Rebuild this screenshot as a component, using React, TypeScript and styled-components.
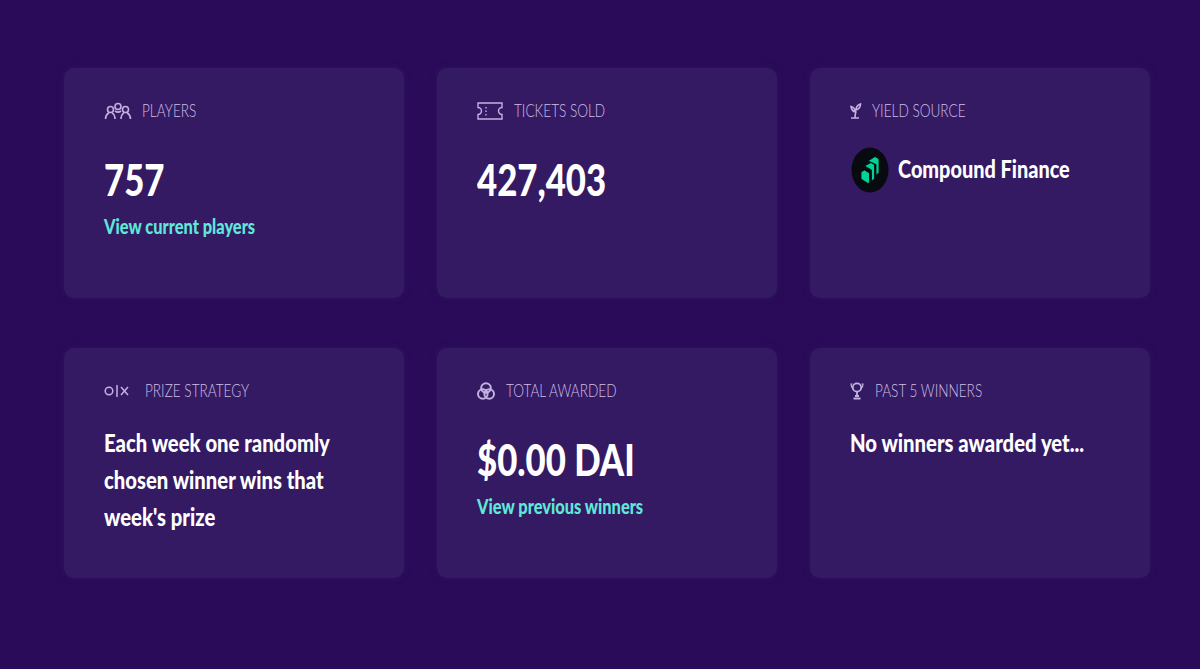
import { ReactElement, ReactNode } from "react";
import styled, { createGlobalStyle, css } from "styled-components";

const GlobalStyle = createGlobalStyle`
    html, body {
        margin: 0;
        background: #2a0b5a;
        font-family: "Lato", sans-serif;
    }
`;

// no condensed face is installed, so the text is squeezed sideways
const condensed = (ratio: number) => css`
    width: ${100 / ratio}%;
    transform: scaleX(${ratio});
    transform-origin: left center;
`;

const Page = styled.div`
    box-sizing: border-box;
    width: 1200px;
    height: 669px;
    padding: 68px 50px 0 64px;
`;

const Grid = styled.div`
    display: grid;
    grid-template-columns: repeat(3, 340.33px);
    grid-auto-rows: 230px;
    column-gap: 32.5px;
    row-gap: 50px;
`;

const Card = styled.section`
    box-sizing: border-box;
    padding: 30px 40px;
    background: #341a63;
    border-radius: 10px;
    box-shadow: 0 0 6px rgba(50, 25, 100, 0.5);
`;

const Header = styled.div`
    display: flex;
    align-items: center;
    height: 26px;
`;

const IconSlot = styled.span<{ $gap: number }>`
    display: flex;
    margin-right: ${props => props.$gap}px;
`;

const Label = styled.h3`
    margin: 0 0 2px;
    font-size: 17px;
    font-weight: 300;
    color: #cdbfe5;
    white-space: nowrap;
    transform: scaleX(0.8);
    transform-origin: left center;
`;

const Stat = styled.p`
    margin: 30px 0 0;
    font-size: 44px;
    line-height: 50px;
    font-weight: 900;
    color: #ffffff;
    ${condensed(0.79)}
`;

const StatLink = styled.a`
    display: block;
    margin-top: 11px;
    font-size: 20px;
    line-height: 22px;
    font-weight: 900;
    color: #5ee8d8;
    ${condensed(0.82)}
`;

const BodyText = styled.p`
    margin: 20px 0 0;
    font-size: 25px;
    line-height: 37px;
    font-weight: 900;
    color: #ffffff;
    ${condensed(0.81)}
`;

const Source = styled.div`
    display: flex;
    align-items: center;
    margin: 23px 0 0 1px;
    gap: 9px;
`;

const CoinSvg = styled.svg`
    flex-shrink: 0;
`;

const SourceName = styled.span`
    margin-bottom: 5px;
    font-size: 25px;
    font-weight: 900;
    color: #ffffff;
    white-space: nowrap;
    transform: scaleX(0.795);
    transform-origin: left center;
`;

const CoinMark = (): ReactElement => (
    <CoinSvg width="38" height="46" viewBox="0 0 38 46">
        <ellipse cx="19" cy="23" rx="18.5" ry="22.5" fill="#070a0e" />
        <g fill="#00d395" stroke="#070a0e" strokeWidth="0.8">
            <path d="M10 25l3.500-2 5 3v9.500l-1.500 1-7-4.500z" />
            <path d="M13.500 19l6.500-3.500 3.500 2.500v14l-3 2V23z" />
            <path d="M17 14l7-4.500 4 2.500v14l-3 2V17.500z" />
        </g>
    </CoinSvg>
);

const PlayersIcon = (): ReactElement => (
    <svg width="28" height="18" viewBox="0 0 28 18" fill="none" stroke="#c3b2e0" strokeWidth="1.6">
        <circle cx="6.500" cy="7.500" r="3" />
        <circle cx="14" cy="4.500" r="3" />
        <circle cx="21.500" cy="7.500" r="3" />
        <path d="M1.500 17c0-3 1.500-5 3.500-6.500M8 10.500c1.800 1.500 3 3.500 3 6.500" />
        <path d="M11 9c2 1.500 4 1.500 6 0" />
        <path d="M26.500 17c0-3-1.500-5-3.500-6.500M20 10.500c-1.800 1.500-3 3.500-3 6.500" />
    </svg>
);

const TicketIcon = (): ReactElement => (
    <svg width="26" height="18" viewBox="0 0 26 18" fill="none" stroke="#c3b2e0" strokeWidth="1.4">
        <path d="M1 1h24v4.500a3.500 3.500 0 0 0 0 7V17H1v-4.500a3.500 3.500 0 0 0 0-7z" />
        <path d="M9 5v1.500M9 8.500v1.500M9 12v1.500" />
    </svg>
);

const SproutIcon = (): ReactElement => (
    <svg width="12" height="16" viewBox="0 0 12 16" fill="none" stroke="#c3b2e0" strokeWidth="1.6">
        <path d="M1 15h8M5 15c0-3 .5-5 1-7M5.500 9C3 8.500 1.500 6.500 1 3.500c2.500.5 4 2.500 4.500 5.500zM6 7c0-3 1.500-5 4.500-6 0 3-1.500 5-4.500 6z" />
    </svg>
);

const StrategyIcon = (): ReactElement => (
    <svg width="26" height="12" viewBox="0 0 26 12" fill="none" stroke="#c3b2e0" strokeWidth="1.5">
        <circle cx="5" cy="6" r="3.800" />
        <path d="M13 0v12M17 2l7 8M24 2l-7 8" />
    </svg>
);

const AwardIcon = (): ReactElement => (
    <svg width="18" height="18" viewBox="0 0 18 18" fill="none" stroke="#c3b2e0" strokeWidth="2">
        <circle cx="9" cy="6" r="4.800" />
        <circle cx="5.800" cy="12" r="4.800" />
        <circle cx="12.200" cy="12" r="4.800" />
    </svg>
);

const TrophyIcon = (): ReactElement => (
    <svg width="14" height="18" viewBox="0 0 14 18" fill="none" stroke="#c3b2e0" strokeWidth="1.800">
        <circle cx="7" cy="5.500" r="4.200" />
        <path d="M7 10v4M3.500 16.500h7M5 14h4" />
        <path d="M2.500 2H1c0 2 .5 3.500 2 4.500M11.500 2H13c0 2-.5 3.500-2 4.500" strokeWidth="1.200" />
    </svg>
);

interface PanelProps {
    icon: ReactNode;
    gap: number;
    label: string;
    children: ReactNode;
}

const Panel = (props: PanelProps): ReactElement => (
    <Card>
        <Header>
            <IconSlot $gap={props.gap}>{props.icon}</IconSlot>
            <Label>{props.label}</Label>
        </Header>
        {props.children}
    </Card>
);

const App = (): ReactElement => (
    <>
        <GlobalStyle />
        <Page>
            <Grid>
                <Panel icon={<PlayersIcon />} gap={10} label="PLAYERS">
                    <Stat>757</Stat>
                    <StatLink>View current players</StatLink>
                </Panel>
                <Panel icon={<TicketIcon />} gap={11} label="TICKETS SOLD">
                    <Stat>427,403</Stat>
                </Panel>
                <Panel icon={<SproutIcon />} gap={10} label="YIELD SOURCE">
                    <Source>
                        <CoinMark />
                        <SourceName>Compound Finance</SourceName>
                    </Source>
                </Panel>
                <Panel icon={<StrategyIcon />} gap={15} label="PRIZE STRATEGY">
                    <BodyText>Each week one randomly chosen winner wins that week's prize</BodyText>
                </Panel>
                <Panel icon={<AwardIcon />} gap={11} label="TOTAL AWARDED">
                    <Stat>$0.00 DAI</Stat>
                    <StatLink>View previous winners</StatLink>
                </Panel>
                <Panel icon={<TrophyIcon />} gap={11} label="PAST 5 WINNERS">
                    <BodyText>No winners awarded yet...</BodyText>
                </Panel>
            </Grid>
        </Page>
    </>
);

export default App;
